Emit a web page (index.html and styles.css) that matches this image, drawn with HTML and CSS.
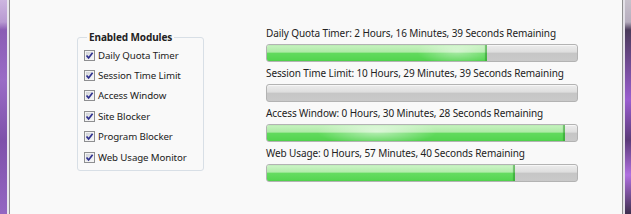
FILE: index.html
```html
<!DOCTYPE html>
<html lang="en">

<head>
    <meta charset="UTF-8">
    <meta name="viewport" content="width=device-width, initial-scale=1.0">
    <title>Time Limits</title>
    <link rel="stylesheet" href="styles.css">
</head>

<body>
    <div class="window">
        <div class="frame frame-left"></div>

        <div class="client">
            <fieldset class="modules">
                <legend>Enabled Modules</legend>
                <label class="module"><span class="check"><svg viewBox="0 0 9 9"><path d="M1.5 4.5 L3.6 6.9 L7.6 1.8" /></svg></span>Daily Quota Timer</label>
                <label class="module"><span class="check"><svg viewBox="0 0 9 9"><path d="M1.5 4.5 L3.6 6.9 L7.6 1.8" /></svg></span>Session Time Limit</label>
                <label class="module"><span class="check"><svg viewBox="0 0 9 9"><path d="M1.5 4.5 L3.6 6.9 L7.6 1.8" /></svg></span>Access Window</label>
                <label class="module"><span class="check"><svg viewBox="0 0 9 9"><path d="M1.5 4.5 L3.6 6.9 L7.6 1.8" /></svg></span>Site Blocker</label>
                <label class="module"><span class="check"><svg viewBox="0 0 9 9"><path d="M1.5 4.5 L3.6 6.9 L7.6 1.8" /></svg></span>Program Blocker</label>
                <label class="module"><span class="check"><svg viewBox="0 0 9 9"><path d="M1.5 4.5 L3.6 6.9 L7.6 1.8" /></svg></span>Web Usage Monitor</label>
            </fieldset>

            <div class="timers">
                <div class="timer">
                    <div class="timer-label">Daily Quota Timer: 2 Hours, 16 Minutes, 39 Seconds Remaining</div>
                    <div class="bar"><div class="fill glow-end" style="width: 71%"></div></div>
                </div>
                <div class="timer">
                    <div class="timer-label">Session Time Limit: 10 Hours, 29 Minutes, 39 Seconds Remaining</div>
                    <div class="bar"><div class="fill" style="width: 0%"></div></div>
                </div>
                <div class="timer">
                    <div class="timer-label">Access Window: 0 Hours, 30 Minutes, 28 Seconds Remaining</div>
                    <div class="bar"><div class="fill glow-mid" style="width: 96%"></div></div>
                </div>
                <div class="timer">
                    <div class="timer-label">Web Usage: 0 Hours, 57 Minutes, 40 Seconds Remaining</div>
                    <div class="bar"><div class="fill" style="width: 80%"></div></div>
                </div>
            </div>
        </div>

        <div class="frame frame-right"></div>
    </div>
</body>

</html>
```

FILE: styles.css
```css
body {
    margin: 0;
    padding: 0;
    font-family: "Noto Sans", "Open Sans", sans-serif;
    font-size: 10px;
    color: #222;
    overflow: hidden;
}

.window {
    display: flex;
    width: 631px;
    height: 214px;
}

.frame {
    flex: none;
}

.frame-left {
    width: 7px;
    border-right: 2px solid #e9e6ee;
    background: linear-gradient(to bottom, #cdb6e0 0px, #b89ad2 22px, #8a5cb4 30px, #9a6cc6 80px, #7e52aa 140px, #9466c2 214px);
}

.frame-right {
    width: 6px;
    border-left: 2px solid #e4e2e8;
    background: linear-gradient(to bottom, #c8c2cc 0px, #b6adbe 22px, #4a3a5a 30px, #9a5ed0 100px, #5a3a78 140px, #b070e0 175px, #3e2e4e 214px);
}

.client {
    flex: 1;
    display: flex;
    align-items: flex-start;
    padding: 25px 0 0 67px;
    background-color: #f9f9f9;
    border-left: 1px solid #8f8f8f;
    border-right: 1px solid #8f8f8f;
}

.modules {
    flex: none;
    box-sizing: border-box;
    width: 127px;
    min-width: 0;
    margin: 4px 0 0 0;
    padding: 0 0 3px 6px;
    border: 1px solid #d8dfe6;
    border-radius: 3px;
}

.modules legend {
    margin-left: 3px;
    padding: 0 2px;
    font-weight: bold;
    letter-spacing: -0.1px;
    line-height: 16px;
}

.module {
    display: flex;
    align-items: center;
    height: 20.4px;
    font-size: 9.7px;
    letter-spacing: -0.1px;
    white-space: nowrap;
}

.check {
    box-sizing: border-box;
    width: 11px;
    height: 11px;
    margin-right: 3px;
    border: 1px solid #8e8f91;
    background: linear-gradient(135deg, #c9ccd2, #eef0f2 70%, #fafafa);
    box-shadow: inset 0 0 0 1px #f4f4f4;
}

.check svg {
    display: block;
    width: 9px;
    height: 9px;
}

.check path {
    fill: none;
    stroke: #2f3190;
    stroke-width: 1.7;
}

.timers {
    flex: none;
    margin-left: 62px;
    width: 312px;
}

.timer-label {
    line-height: 16px;
    letter-spacing: -0.1px;
    white-space: nowrap;
}

.bar {
    box-sizing: border-box;
    height: 18px;
    margin: 3px 0;
    border: 1px solid #b3b3b3;
    border-radius: 3px;
    overflow: hidden;
    background: linear-gradient(to bottom, #ececec 0%, #dedede 45%, #c6c6c6 50%, #cacaca 100%);
    box-shadow: inset 0 1px 0 #f6f6f6;
}

.fill {
    height: 100%;
    background: linear-gradient(to bottom, #cdf5c8 0%, #b2ecab 45%, #66dc62 50%, #54d550 100%);
    box-shadow: inset -2px 0 1px rgba(40, 150, 40, 0.55);
}

.glow-end {
    background:
        radial-gradient(ellipse 40px 14px at 190px 40%, rgba(255, 255, 255, 0.45), rgba(255, 255, 255, 0)),
        linear-gradient(to bottom, #c6f3c0 0%, #aeeaa6 45%, #62da5e 50%, #52d44e 100%);
}

.glow-mid {
    background:
        radial-gradient(ellipse 60px 14px at 110px 40%, rgba(255, 255, 255, 0.55), rgba(255, 255, 255, 0)),
        linear-gradient(to bottom, #c6f3c0 0%, #aeeaa6 45%, #62da5e 50%, #52d44e 100%);
}
```
